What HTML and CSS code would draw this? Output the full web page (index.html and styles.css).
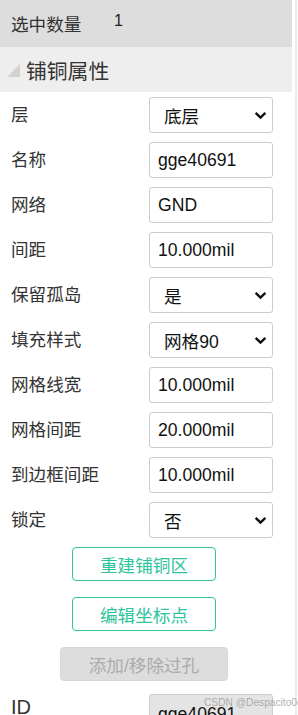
FILE: index.html
```html
<!DOCTYPE html>
<html lang="zh">

<head>
    <meta charset="utf-8">
    <meta name="viewport" content="width=device-width, initial-scale=1.0">
    <title>铺铜属性</title>
    <link rel="stylesheet" href="styles.css">
</head>

<body>
    <div class="wrap">
        <main class="panel">
            <header class="count">
                <span class="count-label">选中数量</span>
                <span class="count-num">1</span>
            </header>
            <h2 class="group"><span class="tri"></span>铺铜属性</h2>

            <section class="props">
                <div class="row">
                    <label>层</label>
                    <div class="box sel"><span>底层</span><svg viewBox="0 0 12 8"><path d="M1.5 1.5 L6 6 L10.5 1.5" /></svg></div>
                </div>
                <div class="row">
                    <label>名称</label>
                    <input class="box" value="gge40691">
                </div>
                <div class="row">
                    <label>网络</label>
                    <input class="box" value="GND">
                </div>
                <div class="row">
                    <label>间距</label>
                    <input class="box" value="10.000mil">
                </div>
                <div class="row">
                    <label>保留孤岛</label>
                    <div class="box sel"><span>是</span><svg viewBox="0 0 12 8"><path d="M1.5 1.5 L6 6 L10.5 1.5" /></svg></div>
                </div>
                <div class="row">
                    <label>填充样式</label>
                    <div class="box sel"><span>网格90</span><svg viewBox="0 0 12 8"><path d="M1.5 1.5 L6 6 L10.5 1.5" /></svg></div>
                </div>
                <div class="row">
                    <label>网格线宽</label>
                    <input class="box" value="10.000mil">
                </div>
                <div class="row">
                    <label>网格间距</label>
                    <input class="box" value="20.000mil">
                </div>
                <div class="row">
                    <label>到边框间距</label>
                    <input class="box" value="10.000mil">
                </div>
                <div class="row">
                    <label>锁定</label>
                    <div class="box sel"><span>否</span><svg viewBox="0 0 12 8"><path d="M1.5 1.5 L6 6 L10.5 1.5" /></svg></div>
                </div>
            </section>

            <section class="actions">
                <button class="btn">重建铺铜区</button>
                <button class="btn">编辑坐标点</button>
                <button class="btn off" disabled>添加/移除过孔</button>
            </section>

            <div class="row id-row">
                <label>ID</label>
                <input class="box ro" value="gge40691" readonly>
            </div>
        </main>
        <div class="track"></div>
    </div>
    <p class="mark">CSDN @Despacito0o</p>
</body>

</html>
```

FILE: styles.css
```css
html,
body {
    margin: 0;
    height: 100%;
    overflow: hidden;
    background: #fff;
}

body {
    font-family: "Liberation Sans", "Noto Sans CJK SC", sans-serif;
    font-size: 17.6px;
    color: #333;
}

.wrap {
    display: flex;
    height: 100%;
}

.panel {
    width: 292px;
    flex: none;
}

.track {
    width: 2px;
    margin-left: 3px;
    background: #ececec;
}

.count {
    display: flex;
    align-items: center;
    height: 47px;
    padding-left: 11px;
    background: #dddddd;
}

.count-label {
    width: 103px;
    margin-top: -1px;
}

.count-num {
    font-size: 16px;
    margin-top: -6px;
    color: #222;
}

.group {
    display: flex;
    align-items: center;
    height: 45px;
    margin: 0;
    padding-left: 7px;
    background: #eeeeee;
    font-size: 20.8px;
    font-weight: normal;
    color: #333;
}

.group-text {
    margin-top: -2px;
}

.tri {
    width: 0;
    height: 0;
    border-style: solid;
    border-width: 0 0 13px 13px;
    border-color: transparent transparent #d2d2d2 transparent;
    margin-right: 6px;
    margin-top: 2px;
}

.props {
    padding-top: 5px;
}

.row {
    display: flex;
    align-items: center;
    height: 36px;
    margin-bottom: 9px;
    padding-left: 11px;
}

.row label {
    width: 138px;
    flex: none;
    padding-bottom: 4px;
}

.box {
    box-sizing: border-box;
    width: 124px;
    height: 36px;
    border: 1px solid #cccccc;
    border-radius: 3px;
    background: #fff;
    font: inherit;
    color: #111;
    padding: 0 8px;
    margin: 0;
    outline: none;
}

.sel {
    display: flex;
    align-items: center;
    justify-content: space-between;
    padding: 0 5px 0 14px;
}

.sel svg {
    width: 13px;
    height: 9px;
}

.sel path {
    fill: none;
    stroke: #111;
    stroke-width: 2.2;
}

.actions {
    display: flex;
    flex-direction: column;
    align-items: center;
    gap: 16px;
    padding-right: 4px;
    margin-top: 3px;
}

.btn {
    box-sizing: border-box;
    width: 144px;
    height: 34px;
    border: 1px solid #2ec49c;
    border-radius: 4px;
    background: #fff;
    font: inherit;
    color: #2ec49c;
    padding: 0;
}

.btn.off {
    width: 168px;
    border-color: #d6d6d6;
    background: #dddddd;
    color: #ababab;
}

.id-row {
    margin-top: 13px;
    align-items: flex-start;
}

.id-row label {
    padding: 2px 0 0;
    font-size: 20px;
}

.ro {
    background: #e4e4e4;
    padding-top: 4px;
}

.mark {
    position: absolute;
    left: 204px;
    top: 697px;
    margin: 0;
    font-size: 10.2px;
    color: rgba(150, 150, 150, 0.75);
    white-space: nowrap;
}
```
